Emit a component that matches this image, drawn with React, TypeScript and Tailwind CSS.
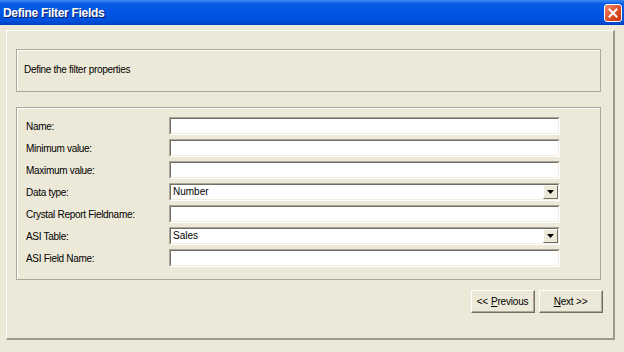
import React from "react";

const font = { fontFamily: '"Liberation Sans", Arial, sans-serif' };

function Sunken({ children, className = "" }: { children?: React.ReactNode; className?: string }) {
  return (
    <div className={`border border-t-[#aca899] border-l-[#aca899] border-b-white border-r-white ${className}`}>
      <div className="h-full border border-t-[#716f64] border-l-[#716f64] border-b-[#f1efe2] border-r-[#f1efe2] bg-white flex items-center">
        {children}
      </div>
    </div>
  );
}

function Group({ children, className = "" }: { children?: React.ReactNode; className?: string }) {
  return (
    <div className={`border border-[#aca899] ${className}`}>
      <div className="h-full border-t border-l border-white">{children}</div>
    </div>
  );
}

function Combo({ value }: { value: string }) {
  return (
    <Sunken className="h-[18px] w-[391px]">
      <span className="flex-1 pl-[2px] text-[10px] text-black leading-none">{value}</span>
      <div className="h-[14px] w-[15px] mr-0 bg-[#ece9d8] border border-t-white border-l-white border-b-[#716f64] border-r-[#716f64] flex items-center justify-center">
        <svg width="7" height="4" viewBox="0 0 7 4"><path d="M0 0h7L3.5 4z" fill="#000" /></svg>
      </div>
    </Sunken>
  );
}

function Button({ children }: { children: React.ReactNode }) {
  return (
    <div className="w-[64px] h-[23px] border border-t-white border-l-white border-b-[#716f64] border-r-[#716f64] bg-[#ece9d8]">
      <div className="h-full border-b border-r border-[#aca899] border-t-transparent border-l-transparent flex items-center justify-center text-[10px] text-black tracking-[-0.2px]">
        {children}
      </div>
    </div>
  );
}

export default function App() {
  const rows: { label: string; combo?: string }[] = [
    { label: "Name:" },
    { label: "Minimum value:" },
    { label: "Maximum value:" },
    { label: "Data type:", combo: "Number" },
    { label: "Crystal Report Fieldname:" },
    { label: "ASI Table:", combo: "Sales" },
    { label: "ASI Field Name:" },
  ];
  return (
    <div className="w-[624px] h-[352px] bg-[#ece9d8] flex flex-col overflow-hidden" style={font}>
      <div className="h-[25px] flex items-center justify-between pl-[3px] pr-[2px] bg-[linear-gradient(180deg,#3d8df5_0%,#0a5ce6_15%,#0054e3_50%,#0050da_85%,#003fc2_100%)]">
        <span className="text-white font-bold text-[12px] tracking-[-0.3px] [text-shadow:1px_1px_0_#0a1c6c]">Define Filter Fields</span>
        <div className="w-[18px] h-[18px] rounded-[3px] border border-white bg-[linear-gradient(135deg,#f08a6a,#dc4a22_60%,#c63610)] flex items-center justify-center">
          <svg width="10" height="10" viewBox="0 0 10 10"><path d="M1.5 1.5L8.5 8.5M8.5 1.5L1.5 8.5" stroke="#fff" strokeWidth="2" strokeLinecap="square" /></svg>
        </div>
      </div>
      <div className="ml-[6px] mt-[5px] w-[609px] h-[310px] border-t border-l border-white border-b-2 border-r-2 border-b-[#9d9a8c] border-r-[#9d9a8c] pl-[9px] pt-[18px] pr-[12px] flex flex-col">
        <Group className="h-[43px] w-[585px]">
          <div className="h-full flex items-center pl-[6px] pb-[3px] text-[10px] text-black tracking-[-0.3px]">Define the filter properties</div>
        </Group>
        <Group className="mt-[15px] h-[173px] w-[585px]">
          <div className="pt-[8px] pl-[8px] flex flex-col gap-[4px]">
            {rows.map((r) => (
              <div key={r.label} className="flex items-center h-[18px]">
                <span className="w-[143px] text-[10px] text-black tracking-[-0.3px]">{r.label}</span>
                {r.combo ? <Combo value={r.combo} /> : <Sunken className="h-[18px] w-[391px]" />}
              </div>
            ))}
          </div>
        </Group>
        <div className="mt-[10px] flex justify-end gap-[4px] w-[587px]">
          <Button>
            &lt;&lt; <span className="underline ml-[3px]">P</span>revious
          </Button>
          <Button>
            <span className="underline">N</span>ext &gt;&gt;
          </Button>
        </div>
      </div>
    </div>
  );
}
